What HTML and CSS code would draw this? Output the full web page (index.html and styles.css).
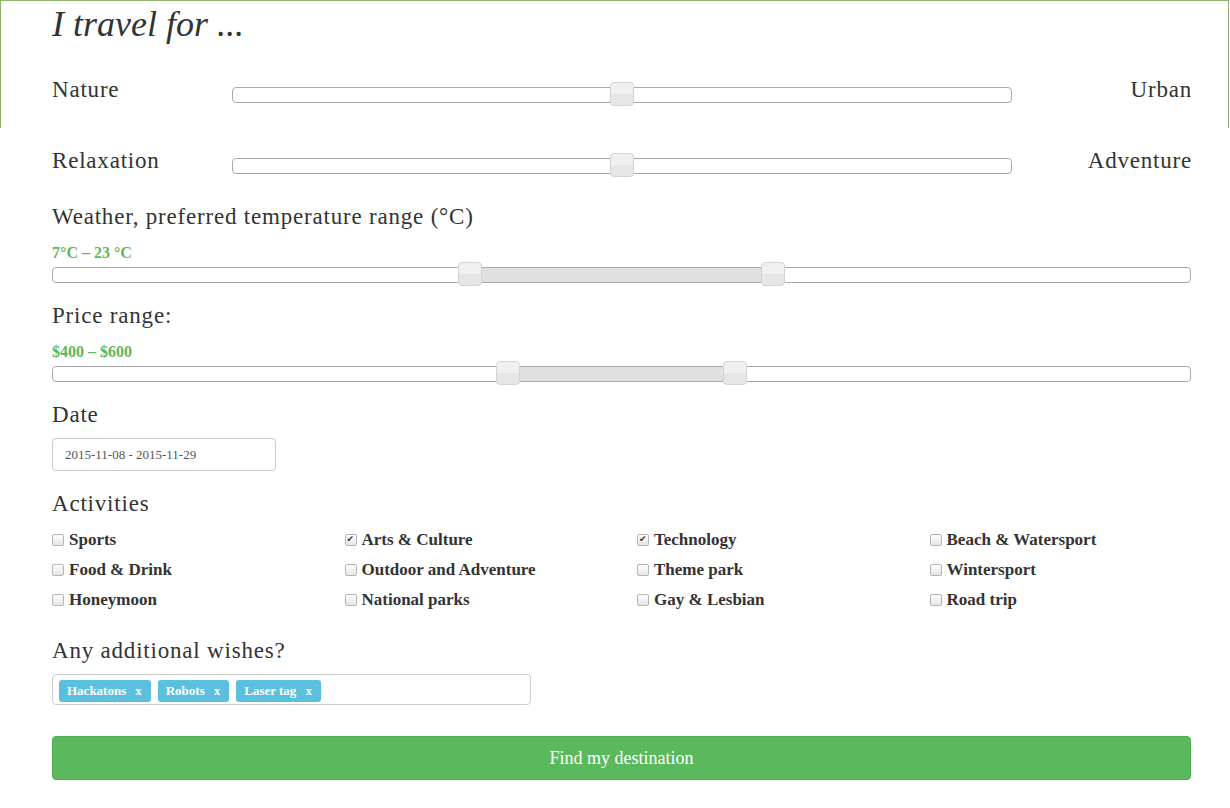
FILE: index.html
```html
<!DOCTYPE html>
<html>
<head>
<meta charset="utf-8">
<link rel="stylesheet" href="styles.css">
</head>
<body>
<div class="frame"></div>
<main class="page">
  <h1 class="title">I travel for ...</h1>

  <div class="pair-row">
    <span class="pair-left">Nature</span>
    <div class="track pair-track"><span class="handle" style="left:50%"></span></div>
    <span class="pair-right">Urban</span>
  </div>

  <div class="pair-row pair-row-2">
    <span class="pair-left">Relaxation</span>
    <div class="track pair-track"><span class="handle" style="left:50%"></span></div>
    <span class="pair-right">Adventure</span>
  </div>

  <div class="label first-label">Weather, preferred temperature range (°C)</div>
  <div class="value">7°C – 23 °C</div>
  <div class="track">
    <span class="range" style="left:36.7%;width:26.6%"></span>
    <span class="handle" style="left:36.7%"></span>
    <span class="handle" style="left:63.3%"></span>
  </div>

  <div class="label">Price range:</div>
  <div class="value">$400 – $600</div>
  <div class="track">
    <span class="range" style="left:40%;width:20%"></span>
    <span class="handle" style="left:40%"></span>
    <span class="handle" style="left:60%"></span>
  </div>

  <div class="label">Date</div>
  <div class="date-input">2015-11-08 - 2015-11-29</div>

  <div class="label">Activities</div>
  <div class="activities">
    <label class="check"><input type="checkbox"> Sports</label>
    <label class="check"><input type="checkbox" checked> Arts &amp; Culture</label>
    <label class="check"><input type="checkbox" checked> Technology</label>
    <label class="check"><input type="checkbox"> Beach &amp; Watersport</label>
    <label class="check"><input type="checkbox"> Food &amp; Drink</label>
    <label class="check"><input type="checkbox"> Outdoor and Adventure</label>
    <label class="check"><input type="checkbox"> Theme park</label>
    <label class="check"><input type="checkbox"> Wintersport</label>
    <label class="check"><input type="checkbox"> Honeymoon</label>
    <label class="check"><input type="checkbox"> National parks</label>
    <label class="check"><input type="checkbox"> Gay &amp; Lesbian</label>
    <label class="check"><input type="checkbox"> Road trip</label>
  </div>

  <div class="label wishes-label">Any additional wishes?</div>
  <div class="tags-input">
    <span class="tag">Hackatons<span class="tag-x">x</span></span>
    <span class="tag">Robots<span class="tag-x">x</span></span>
    <span class="tag">Laser tag<span class="tag-x">x</span></span>
  </div>

  <button class="submit">Find my destination</button>
</main>
</body>
</html>
```

FILE: styles.css
```css
html, body {
  margin: 0;
  padding: 0;
  background: #fff;
}
body {
  font-family: "Liberation Serif", "DejaVu Serif", serif;
  color: #333;
  width: 1230px;
  height: 808px;
  overflow: hidden;
  position: relative;
}
.frame {
  position: absolute;
  left: 0;
  top: 0;
  width: 1227px;
  height: 127px;
  border: 1px solid #8db46a;
  border-bottom: none;
  pointer-events: none;
}
.page {
  padding: 0 39px 0 52px;
  display: flex;
  flex-direction: column;
}
.title {
  margin: 4px 0 0 0;
  font-size: 36px;
  line-height: 40px;
  font-style: italic;
  font-weight: normal;
}
.pair-row {
  display: flex;
  align-items: flex-start;
  margin-top: 33px;
  font-size: 23px;
  line-height: 26px;
  letter-spacing: 0.8px;
}
.pair-row-2 {
  margin-top: 45px;
}
.pair-left {
  width: 180px;
  flex: none;
}
.pair-right {
  flex: 1;
  text-align: right;
  margin-right: -1px;
}
.track {
  position: relative;
  height: 16px;
  box-sizing: border-box;
  border: 1px solid #aaa;
  border-radius: 4px;
  background: #fff;
  margin-top: 4px;
}
.pair-track {
  width: 780px;
  flex: none;
  margin-top: 10px;
}
.handle {
  position: absolute;
  top: -6px;
  width: 22px;
  height: 22px;
  margin-left: -12px;
  border: 1px solid #d3d3d3;
  border-radius: 4px;
  background: linear-gradient(#f0f0f0 0, #f0f0f0 50%, #e6e6e6 50%, #e6e6e6 100%);
}
.range {
  position: absolute;
  top: 0;
  bottom: 0;
  background: #e0e0e0;
}
.label {
  font-size: 23px;
  line-height: 26px;
  letter-spacing: 0.8px;
  margin-top: 20px;
}
.first-label {
  margin-top: 30px;
}
.value {
  font-size: 16px;
  line-height: 20px;
  font-weight: bold;
  color: #5cb85c;
  margin-top: 13px;
}
.date-input {
  margin-top: 10px;
  width: 224px;
  height: 33px;
  box-sizing: border-box;
  border: 1px solid #ccc;
  border-radius: 4px;
  font-size: 13px;
  line-height: 31px;
  padding-left: 12px;
  color: #555;
}
.activities {
  margin-top: 8px;
  display: grid;
  grid-template-columns: 292.5px 292.5px 292.5px 261px;
  grid-auto-rows: 30px;
}
.check {
  display: flex;
  align-items: center;
  font-size: 17px;
  font-weight: bold;
  white-space: nowrap;
}
.check input {
  appearance: none;
  -webkit-appearance: none;
  position: relative;
  margin: 0 5px 0 0;
  width: 12px;
  height: 12px;
  box-sizing: border-box;
  border: 1px solid #b5b5b5;
  border-radius: 2px;
  background: linear-gradient(#fdfdfd, #e6e6e6);
}
.check input:checked::after {
  content: "✔";
  position: absolute;
  left: 1px;
  top: -2px;
  font-size: 9px;
  line-height: 12px;
  color: #333;
  font-family: "DejaVu Sans", sans-serif;
}
.wishes-label {
  margin-top: 23px;
}
.tags-input {
  margin-top: 10px;
  width: 479px;
  height: 31px;
  box-sizing: border-box;
  border: 1px solid #ccc;
  border-radius: 4px;
  padding: 5px 6px;
  display: flex;
  gap: 7px;
}
.tag {
  background: #5bc0de;
  color: #fff;
  font-size: 13px;
  font-weight: bold;
  line-height: 22px;
  height: 22px;
  padding: 0 9px 0 8px;
  border-radius: 3px;
}
.tag-x {
  margin-left: 9px;
}
.submit {
  margin-top: 31px;
  width: 1139px;
  height: 44px;
  border: 1px solid #4cae4c;
  border-radius: 4px;
  background: #5cb85c;
  color: #fff;
  font-family: "Liberation Serif", "DejaVu Serif", serif;
  font-size: 18px;
  padding: 0;
}
```
